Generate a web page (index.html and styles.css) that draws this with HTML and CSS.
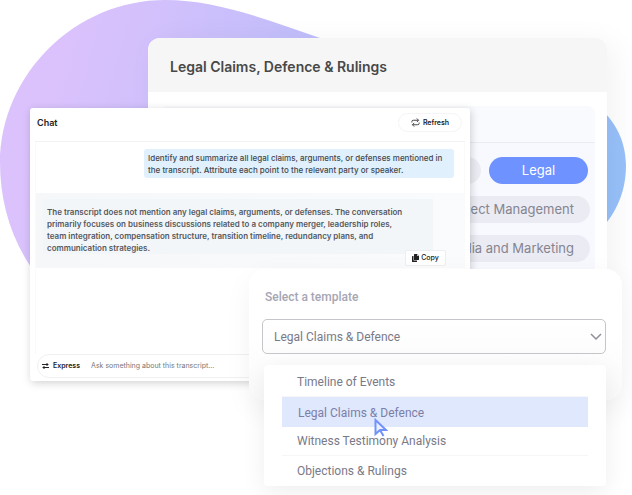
FILE: index.html
```html
<!DOCTYPE html>
<html lang="en">

<head>
    <meta charset="UTF-8">
    <meta name="viewport" content="width=device-width, initial-scale=1.0">
    <title>Legal Claims, Defence &amp; Rulings</title>
    <link rel="stylesheet" href="styles.css">
</head>

<body>
    <main class="hero">
        <svg class="blob" viewBox="0 0 632 495" preserveAspectRatio="none" aria-hidden="true">
            <defs>
                <linearGradient id="blob-fill" gradientUnits="userSpaceOnUse" x1="40" y1="90" x2="590" y2="240">
                    <stop offset="0" stop-color="#dcc2fc" />
                    <stop offset="0.5" stop-color="#bcbdfb" />
                    <stop offset="1" stop-color="#97c0fa" />
                </linearGradient>
            </defs>
            <path fill="url(#blob-fill)" d="M165 0C215 0 262 18 320 38C380 58 440 70 500 72C570 76 626 110 626 165C626 205 605 235 560 260L60 300C20 265 0 215 0 163C0 75 75 0 165 0Z" />
        </svg>

        <section class="rulings">
            <header class="rulings-header">
                <h1>Legal Claims, Defence &amp; Rulings</h1>
            </header>
            <div class="topics">
                <div class="topics-bar"></div>
                <div class="topics-list">
                    <div class="topics-row">
                        <button class="pill" type="button">General</button>
                        <button class="pill pill-active" type="button">Legal</button>
                    </div>
                    <button class="pill" type="button">Project Management</button>
                    <button class="pill" type="button">Media and Marketing</button>
                </div>
            </div>
        </section>

        <section class="chat">
            <header class="chat-header">
                <h2>Chat</h2>
                <button class="refresh" type="button">
                    <svg width="9" height="9" viewBox="0 0 20 20" fill="none" stroke="#333" stroke-width="2" aria-hidden="true">
                        <path d="M2 10V8a3 3 0 0 1 3-3h11M13 1l4 4-4 4M18 10v2a3 3 0 0 1-3 3H4M7 11l-4 4 4 4" />
                    </svg>
                    Refresh
                </button>
            </header>
            <div class="messages">
                <p class="question">Identify and summarize all legal claims, arguments, or defenses mentioned in<br>
                    the transcript. Attribute each point to the relevant party or speaker.</p>
                <div class="answer">
                    <p>The transcript does not mention any legal claims, arguments, or defenses. The conversation<br>
                        primarily focuses on business discussions related to a company merger, leadership roles,<br>
                        team integration, compensation structure, transition timeline, redundancy plans, and<br>
                        communication strategies.</p>
                    <button class="copy" type="button">
                        <svg width="7" height="8" viewBox="0 0 14 16" fill="#222" aria-hidden="true">
                            <path d="M5 0h5v4h4v7a1 1 0 0 1-1 1H5a1 1 0 0 1-1-1V1a1 1 0 0 1 1-1ZM11 0l3 3h-3ZM1 4h2v9h7v2a1 1 0 0 1-1 1H1a1 1 0 0 1-1-1V5a1 1 0 0 1 1-1Z" />
                        </svg>
                        Copy
                    </button>
                </div>
            </div>
            <form class="ask">
                <button class="express" type="button">
                    <svg width="7" height="6" viewBox="0 0 14 12" fill="none" stroke="#222" stroke-width="2" aria-hidden="true">
                        <path d="M0 3h12M9 0l3 3-3 3M14 9H2M5 6L2 9l3 3" />
                    </svg>
                    Express
                </button>
                <input type="text" aria-label="Ask something" placeholder="Ask something about this transcript...">
            </form>
        </section>

        <section class="template">
            <label for="template">Select a template</label>
            <div class="select-box">
                <select id="template">
                    <option>Timeline of Events</option>
                    <option selected>Legal Claims &amp; Defence</option>
                    <option>Witness Testimony Analysis</option>
                    <option>Objections &amp; Rulings</option>
                </select>
                <svg class="chevron" width="12" height="8" viewBox="0 0 12 8" fill="none" stroke="#8f8f9b" stroke-width="1.5" aria-hidden="true">
                    <path d="M1 1l5 5 5-5" />
                </svg>
            </div>
            <div class="menu">
                <button type="button">Timeline of Events</button>
                <button class="selected" type="button">Legal Claims &amp; Defence</button>
                <button type="button">Witness Testimony Analysis</button>
                <button type="button">Objections &amp; Rulings</button>
                <svg class="cursor" width="14" height="20" viewBox="0 0 14 20" fill="none" stroke="#7093fb" stroke-width="2" aria-hidden="true">
                    <path fill="#edf1ff" d="M1.500 2v14l4.500-4H12Z" />
                    <path d="M6 12l3.500 6" />
                </svg>
            </div>
        </section>
    </main>
</body>

</html>
```
FILE: styles.css
```css
* {
    box-sizing: border-box;
}

body {
    margin: 0;
    background: #fff;
    font-family: Inter, "Open Sans", sans-serif;
}

h1, h2, p {
    margin: 0;
}

button, input, select {
    font: inherit;
    color: inherit;
    border: 0;
    background: none;
    margin: 0;
    padding: 0;
}

.hero {
    position: relative;
    min-height: 495px;
    overflow: hidden;
}

.blob {
    position: absolute;
    left: 0;
    top: 0;
    width: 100%;
    height: 495px;
}

/* back card */
.rulings {
    position: absolute;
    left: 148px;
    right: 25px;
    top: 38px;
    padding-bottom: 12px;
    background: #fff;
    border-radius: 12px 12px 8px 8px;
    box-shadow: 8px 4px 30px rgba(0, 0, 0, 0.05);
}

.rulings-header {
    padding: 19px 22px 15px;
    background: #f6f6f6;
    border-radius: 12px 12px 0 0;
}

.rulings-header h1 {
    font-size: 14px;
    line-height: 20px;
    font-weight: 600;
    color: #484848;
}

.topics {
    margin: 14px 12px 0;
    background: #f8f9fe;
    border-radius: 8px;
}

.topics-bar {
    height: 37px;
    background: #f8fafe;
    border-bottom: 1px solid #e9edf3;
    border-radius: 8px 8px 0 0;
}

.topics-list {
    display: flex;
    flex-direction: column;
    align-items: flex-end;
    gap: 12px;
    padding: 14px 5px 12px;
}

.topics-row {
    display: flex;
    gap: 8px;
    padding-right: 2px;
}

.pill {
    padding: 0 16px;
    font-size: 13px;
    line-height: 27px;
    color: #85858f;
    background: #ebebf3;
    border-radius: 14px;
}

.pill-active {
    width: 99px;
    color: #fff;
    background: #6e92ff;
}

/* chat window */
.chat {
    position: absolute;
    left: 30px;
    right: 162px;
    top: 108px;
    padding: 5px 5px 3px;
    background: #fff;
    border-radius: 3px;
    box-shadow: 1px 2px 8px rgba(0, 0, 0, 0.18);
    font-size: 8px;
    line-height: 12px;
}

.chat-header {
    display: flex;
    align-items: center;
    justify-content: space-between;
    padding: 0 3px 9px 2px;
    border-bottom: 1px solid #f3f3f3;
}

.chat-header h2 {
    font-size: 9px;
    font-weight: 600;
    color: #222;
}

.refresh {
    display: flex;
    align-items: center;
    justify-content: center;
    gap: 3px;
    width: 64px;
    height: 19px;
    border: 1px solid #f5f5f5;
    border-radius: 10px;
    font-size: 7px;
    font-weight: 600;
    color: #222;
}

.messages {
    display: flex;
    flex-direction: column;
    min-height: 212px;
    padding-top: 7px;
    border: solid #fafafa;
    border-width: 0 1px;
    font-weight: 500;
    white-space: nowrap;
    color: #44484d;
}

.question {
    align-self: flex-end;
    width: 310px;
    margin-right: 10px;
    padding: 3px 4px 2px;
    background: #e0f0fd;
    border-radius: 3px;
}

.answer {
    display: flex;
    flex-direction: column;
    margin-top: 15px;
    padding: 6px 7px 2px;
    background: linear-gradient(to right, #f5f7f9, #fafbfc);
}

.answer p {
    max-width: 390px;
    padding: 7px 4px 0;
    background: #f3f6f9;
    font-weight: 600;
    color: #55595e;
}

.copy {
    display: flex;
    align-items: center;
    justify-content: center;
    align-self: flex-end;
    gap: 2px;
    width: 41px;
    height: 16px;
    margin: -4px 11px 0 0;
    background: #fff;
    border: 1px solid #eee;
    border-radius: 2px;
    font-size: 7px;
    color: #222;
}

.ask {
    display: flex;
    align-items: center;
    gap: 11px;
    height: 24px;
    padding: 0 4px;
    margin: 0 2px;
    border: 1px solid #f0f0f0;
    border-radius: 12px;
}

.express {
    display: flex;
    align-items: center;
    gap: 4px;
    font-size: 7px;
    font-weight: 600;
    color: #222;
}

.ask input {
    flex: 1;
    min-width: 0;
    font-size: 7px;
}

.ask input::placeholder {
    color: #777;
}

/* template picker */
.template {
    position: absolute;
    left: 249px;
    right: 10px;
    top: 269px;
    padding: 18px 16px 46px 13px;
    background: linear-gradient(#fff 50%, #fafafa);
    border-radius: 16px;
    box-shadow: 2px 10px 30px rgba(0, 0, 0, 0.06);
    font-family: Roboto, sans-serif;
    font-size: 12px;
    line-height: 20px;
    color: #797987;
}

.template label {
    display: block;
    padding-left: 3px;
    font-weight: 500;
    color: #a6a6b3;
}

.select-box {
    position: relative;
    margin-top: 12px;
}

.select-box select {
    display: block;
    width: 100%;
    height: 35px;
    padding: 0 11px;
    appearance: none;
    border: 1px solid #c6c6ca;
    border-radius: 5px;
    background: linear-gradient(#fff, #fcfcfc);
}

.chevron {
    position: absolute;
    right: 4px;
    top: 14px;
}

.menu {
    position: absolute;
    left: 15px;
    right: 16px;
    top: 96px;
    display: flex;
    flex-direction: column;
    padding: 3px 18px 1px;
    background: #fff;
    border-radius: 4px;
    box-shadow: 0 6px 24px rgba(0, 0, 0, 0.07);
}

.menu button {
    height: 29px;
    padding: 0 15px;
    text-align: left;
    border-bottom: 1px solid #f6f6f8;
}

.menu button:last-of-type {
    border-bottom: 0;
}

.menu .selected {
    height: 30px;
    padding: 2px 16px 0;
    background: #e0e8fe;
    border-bottom: 0;
    color: #7b7fa5;
}

.cursor {
    position: absolute;
    left: 110px;
    top: 53px;
}
```
